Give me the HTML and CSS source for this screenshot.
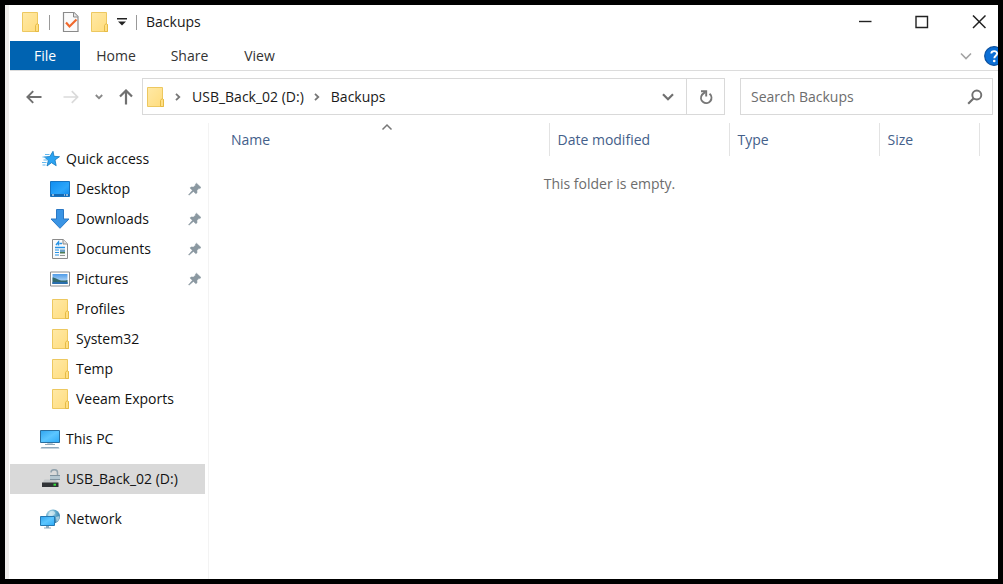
FILE: index.html
```html
<!DOCTYPE html>
<html lang="en">
<head>
<meta charset="utf-8">
<meta name="viewport" content="width=device-width, initial-scale=1">
<title>Backups</title>
<link rel="stylesheet" href="styles.css">
</head>
<body>
<svg class="defs" aria-hidden="true">
  <defs>
    <linearGradient id="g-folder" x1="0" y1="0" x2="1" y2="1"><stop offset="0" stop-color="#ffe9a6"/><stop offset="1" stop-color="#ffdc7c"/></linearGradient>
    <linearGradient id="g-screen" x1="0" y1="0" x2="1" y2="1"><stop offset="0" stop-color="#2fa4ee"/><stop offset=".5" stop-color="#5cc6ff"/><stop offset="1" stop-color="#2daaf7"/></linearGradient>
    <linearGradient id="g-desk" x1="0" y1="0" x2="1" y2="1"><stop offset="0" stop-color="#0f8df0"/><stop offset=".6" stop-color="#2ca6fb"/><stop offset="1" stop-color="#0c86ea"/></linearGradient>
    <linearGradient id="g-sky" x1="0" y1="0" x2="0" y2="1"><stop offset="0" stop-color="#4f9be8"/><stop offset="1" stop-color="#d6ecfa"/></linearGradient>
    <radialGradient id="g-globe" cx=".35" cy=".3" r=".8"><stop offset="0" stop-color="#c9e8f2"/><stop offset=".5" stop-color="#5ba5c8"/><stop offset="1" stop-color="#2c6f9d"/></radialGradient>
  </defs>
  <symbol id="folder" viewBox="0 0 20 22">
    <path d="M2.500 1.500h15v11l1 1v7h-16z" fill="url(#g-folder)" stroke="#edc860"/>
    <path d="M15.500 20.500v-6l1.500-2 1.500 1v7z" fill="#ffdf85" stroke="#e6bb45"/>
  </symbol>
  <symbol id="pin" viewBox="0 0 14 14">
    <path d="M8.500 1.200 13 5.500 11.800 6.600 11 6.300 8.900 8.600 9.100 10.700 7.900 11.800 5.400 9.400 1 13.200.6 12.800 4.400 8.300 2 5.900 3.200 4.900 5.400 5.100 7.700 3 7.300 2.300z" fill="#8b98a1" stroke="#8b98a1" stroke-width=".5"/>
  </symbol>
</svg>

<div class="window">
  <header class="titlebar">
    <div class="quickbar">
      <svg class="folder"><use href="#folder"/></svg>
      <span class="rule"></span>
      <button class="bare properties" aria-label="Properties">
        <svg width="18" height="22" viewBox="0 0 18 22"><path d="M1.500 1.500h10.500l4 4v15H1.500z" fill="#fafafa" stroke="#8a8a8a" stroke-width="1.200"/><path d="M11.500 1.500v4.500H16" fill="#e6e6e6" stroke="#8a8a8a"/><path d="m4 11.500 3.500 4 7-7" fill="none" stroke="#f0682c" stroke-width="2.200"/></svg>
      </button>
      <button class="bare" aria-label="New folder"><svg class="folder"><use href="#folder"/></svg></button>
      <button class="bare customize" aria-label="Customize Quick Access Toolbar">
        <svg width="10" height="8" viewBox="0 0 10 8"><path d="M0 0h10v1.500H0zM1 3.500h8L5 7.500z" fill="#222"/></svg>
      </button>
      <span class="rule"></span>
    </div>
    <h1 class="title">Backups</h1>
    <div class="caption">
      <button class="bare" aria-label="Minimize"><svg width="14" height="14" viewBox="0 0 14 14"><path d="M1 6.500h12.500" stroke="#222" stroke-width="1.400"/></svg></button>
      <button class="bare" aria-label="Maximize"><svg width="14" height="14" viewBox="0 0 14 14"><path d="M1 1.500h11.500V12.500H1z" fill="none" stroke="#222" stroke-width="1.400"/></svg></button>
      <button class="bare" aria-label="Close"><svg width="14" height="14" viewBox="0 0 14 14"><path d="m1 .5 12.500 12.500M13.500.5 1 13" stroke="#222" stroke-width="1.500"/></svg></button>
    </div>
  </header>

  <nav class="ribbon" aria-label="Ribbon">
    <button class="tab file">File</button>
    <button class="tab">Home</button>
    <button class="tab">Share</button>
    <button class="tab">View</button>
    <div class="ribbon-end">
      <button class="bare" aria-label="Expand the Ribbon"><svg width="12" height="8" viewBox="0 0 12 8"><path d="m1 1.500 5 5 5-5" fill="none" stroke="#a3a3a3" stroke-width="1.600"/></svg></button>
      <button class="bare" aria-label="Help"><svg width="20" height="20" viewBox="0 0 20 20"><circle cx="10" cy="10" r="9.300" fill="#0b6fd6" stroke="#0a4f9e" stroke-width="1.200"/><path d="M7.300 7.600c0-3.300 5.800-3.300 5.800 0 0 2-2.800 2.200-2.800 4.600" fill="none" stroke="#fff" stroke-width="1.900"/><circle cx="10.200" cy="15" r="1.300" fill="#fff"/></svg></button>
    </div>
  </nav>

  <div class="toolbar">
    <div class="history">
      <button class="bare back" aria-label="Back"><svg width="16" height="14" viewBox="0 0 16 14"><path d="M15.500 7H1.500M7.200 1.200 1.400 7l5.800 5.800" fill="none" stroke="#707070" stroke-width="1.900"/></svg></button>
      <button class="bare" aria-label="Forward" disabled><svg width="16" height="14" viewBox="0 0 16 14"><path d="M.5 7h14M8.800 1.200 14.600 7l-5.800 5.800" fill="none" stroke="#dadada" stroke-width="1.700"/></svg></button>
      <button class="bare" aria-label="Recent locations"><svg width="8" height="6" viewBox="0 0 8 6"><path d="m.8 1 3.200 3.200L7.200 1" fill="none" stroke="#888" stroke-width="1.800"/></svg></button>
      <button class="bare" aria-label="Up"><svg width="14" height="16" viewBox="0 0 14 16"><path d="M7 15.500v-14M1 7.500l6-6 6 6" fill="none" stroke="#707070" stroke-width="2.200"/></svg></button>
    </div>
    <div class="address">
      <svg class="folder"><use href="#folder"/></svg>
      <svg class="crumb-arrow" viewBox="0 0 6 8"><path d="M1 .8 4.300 4 1 7.200" fill="none" stroke="#777" stroke-width="1.800"/></svg>
      <a class="crumb" href="#drive">USB_Back_02 (D:)</a>
      <svg class="crumb-arrow" viewBox="0 0 6 8"><path d="M1 .8 4.300 4 1 7.200" fill="none" stroke="#777" stroke-width="1.800"/></svg>
      <a class="crumb" href="#files">Backups</a>
      <button class="bare previous" aria-label="Previous locations"><svg width="12" height="8" viewBox="0 0 12 8"><path d="m1 1.300 5 5 5-5" fill="none" stroke="#707070" stroke-width="2.200"/></svg></button>
      <button class="bare refresh" aria-label="Refresh"><svg width="14" height="16" viewBox="0 0 14 16"><path d="M10.500 4.800A5.200 5.200 0 1 1 3 5.800L6.200 3" fill="none" stroke="#777" stroke-width="2"/><path d="M2 2.200h5.200v5.300" fill="none" stroke="#777" stroke-width="1.900"/></svg></button>
    </div>
    <div class="search">
      <input type="search" placeholder="Search Backups" aria-label="Search Backups">
      <button class="bare" aria-label="Search"><svg width="16" height="16" viewBox="0 0 16 16"><circle cx="9.800" cy="6" r="4.500" fill="none" stroke="#707070" stroke-width="1.900"/><path d="M6.700 9.200 1.200 14.700" stroke="#707070" stroke-width="2.100"/></svg></button>
    </div>
  </div>

  <div class="body">
    <nav class="tree" aria-label="Navigation pane">
      <a class="row root" href="#quick">
        <svg class="icon" viewBox="0 0 20 20"><path d="M13 2.300 14 7.300l5.500.4-4.500 3.300 1.200 5.700-4.700-3L7 17l1.300-5.500L4.500 8l5.300-.5z" fill="#2ba3f2" stroke="#1478bd" stroke-width=".8"/><path d="M5 5.500h4.500M2.500 8h4M3.500 11h4M2 13.500h4.500M2.500 16h3" stroke="#63b8ef" stroke-width="1.100"/></svg>
        <span>Quick access</span>
      </a>
      <a class="row" href="#desktop">
        <svg class="icon" viewBox="0 0 20 20"><path d="M.5 2.500h19v15H.5z" fill="url(#g-desk)" stroke="#1773c0"/><path d="M1 15h18v2H1z" fill="#1569b3"/><path d="M2 15.500h2v1H2zM14 15.500h1v1h-1zM16 15.500h2v1h-2z" fill="#fff"/></svg>
        <span>Desktop</span><svg class="pin"><use href="#pin"/></svg>
      </a>
      <a class="row" href="#downloads">
        <svg class="icon" viewBox="0 0 20 20"><path d="M6.500.5h7v9.500h5.500L10 19.300 1 10h5.500z" fill="#3a94e4" stroke="#2a78c5"/></svg>
        <span>Downloads</span><svg class="pin"><use href="#pin"/></svg>
      </a>
      <a class="row" href="#documents">
        <svg class="icon" viewBox="0 0 20 20"><path d="M2.500.5h10.700l4.300 4.300v14.700h-15z" fill="#fafafa" stroke="#8b8b8b"/><path d="M13 .5V5h4.500" fill="#e4e4e4" stroke="#8b8b8b"/><path d="m6 6 2.500-3v3.500M9.500 4.500H12M5 8.500h10" stroke="#2693e6" stroke-width="1.400" fill="none"/><path d="M5 11h4M5 13.500h4M5 16h4" stroke="#2693e6"/><path d="M10 10.500h5v3h-5z" fill="#6a9fc4"/><path d="M10 13h5v1.500h-5z" fill="#4e7b55"/><path d="M10 16.500h5" stroke="#999"/></svg>
        <span>Documents</span><svg class="pin"><use href="#pin"/></svg>
      </a>
      <a class="row" href="#pictures">
        <svg class="icon" viewBox="0 0 20 20"><path d="M.5 3h19v14H.5z" fill="#fff" stroke="#8e8e8e"/><path d="M2.500 5h15v10h-15z" fill="url(#g-sky)"/><path d="M2.500 8.500c3 0 5 2.500 9 3 2 .3 4 0 6-.5v4h-15z" fill="#33696d"/><path d="M2.500 13h15v2h-15z" fill="#2a6fae"/></svg>
        <span>Pictures</span><svg class="pin"><use href="#pin"/></svg>
      </a>
      <a class="row" href="#profiles"><svg class="folder"><use href="#folder"/></svg><span>Profiles</span></a>
      <a class="row" href="#system32"><svg class="folder"><use href="#folder"/></svg><span>System32</span></a>
      <a class="row" href="#temp"><svg class="folder"><use href="#folder"/></svg><span>Temp</span></a>
      <a class="row" href="#veeam"><svg class="folder"><use href="#folder"/></svg><span>Veeam Exports</span></a>
      <a class="row root spaced" href="#pc">
        <svg class="icon" viewBox="0 0 20 20"><path d="M.5 1.500h19v12H.5z" fill="url(#g-screen)" stroke="#2b6f9f"/><path d="M7.500 14h5l1 2h-7z" fill="#b9c9d4"/><path d="M5 15.500h10" stroke="#91a8b8"/><path d="M1.500 18h17l1 1.500H.5z" fill="#8fa9bc"/></svg>
        <span>This PC</span>
      </a>
      <a class="row root spaced selected" href="#drive" id="drive" aria-current="page">
        <svg class="icon" viewBox="0 0 20 20"><path d="M4.500 10.500H16l2 3.500H2.500z" fill="#c4c8ca"/><path d="M11 3.500C11-.2 17.500-.2 17.500 3.500V6" fill="none" stroke="#91a2ad" stroke-width="1.500"/><path d="M10 6h10v5H10z" fill="#b4c6d0"/><path d="M10 6.500h10M10 10.500h10" stroke="#7f929e"/><path d="M2 13.500h16.500V18H2z" fill="#303336"/><path d="M13.500 14.700H16v2h-2.500z" fill="#35e33c"/></svg>
        <span>USB_Back_02 (D:)</span>
      </a>
      <a class="row root spaced" href="#network">
        <svg class="icon" viewBox="0 0 20 20"><circle cx="13" cy="7.500" r="7" fill="url(#g-globe)"/><path d="M10 2.500c2-1.500 4-1 5 1s-2 2-3 4-3 0-4-1zM16 8l3.500-1c0 3-1 5-3 6.500z" fill="#d7edf2" opacity=".65"/><path d="M.5 7.500h14v9H.5z" fill="url(#g-screen)" stroke="#2479b3"/><path d="M6 17h3v1.500H6zM4 18.500h7v1H4z" fill="#8fa9bc"/></svg>
        <span>Network</span>
      </a>
    </nav>

    <main class="files" id="files">
      <table class="list">
        <colgroup><col><col class="col-date"><col class="col-type"><col class="col-size"><col class="col-end"></colgroup>
        <thead>
          <tr>
            <th scope="col" aria-sort="ascending"><div class="name-head"><span>Name</span><svg class="sort" viewBox="0 0 12 8"><path d="m1.500 6.500 4.500-4.500 4.500 4.500" fill="none" stroke="#777" stroke-width="1.500"/></svg></div></th>
            <th scope="col">Date modified</th>
            <th scope="col">Type</th>
            <th scope="col">Size</th>
            <td></td>
          </tr>
        </thead>
        <tbody><tr><td class="empty" colspan="5">This folder is empty.</td></tr></tbody>
      </table>
    </main>
  </div>
</div>
</body>
</html>
```
FILE: styles.css
```css
* { box-sizing: border-box; }

body {
  margin: 0;
  font: 14px/20px "Open Sans", "Noto Sans", sans-serif;
  color: #1a1a1a;
}

.defs { position: absolute; width: 0; height: 0; }
svg { display: block; flex: none; }

.window {
  display: flex;
  flex-direction: column;
  min-height: 100vh;
  border: 5px solid #000;
  padding-left: 5px;
  background: linear-gradient(to right, #efedeb 4px, #fff 4px);
  overflow: hidden;
}

button, input { font: inherit; color: inherit; }

.bare {
  display: flex;
  align-items: center;
  justify-content: center;
  padding: 0;
  border: 0;
  background: none;
}

.folder { width: 20px; height: 22px; }

/* Title bar */
.titlebar { display: flex; align-items: center; height: 36px; padding: 0 0 2px 10px; }
.quickbar { display: flex; align-items: center; }
.rule { width: 1px; height: 15px; background: #999; margin-left: 9px; }
.properties { margin: 0 9px 0 12px; }
.customize { margin-left: 8px; }
.title { margin: 0 0 0 9px; font-size: 14px; font-weight: 400; }
.caption { display: flex; margin-left: auto; }
.caption .bare { width: 57px; height: 32px; }
.caption .bare:last-child { width: 38px; margin-left: 10px; }

/* Ribbon tabs */
.ribbon { display: flex; height: 30px; border-bottom: 1px solid #dcdcdc; }
.tab { padding: 0; width: 75px; border: 0; background: none; color: #333; }
.tab.file { width: 70px; background: #0063b1; color: #fff; }
.tab:nth-child(2) { width: 72px; }
.tab:nth-child(4) { width: 65px; }
.ribbon-end { display: flex; gap: 12px; margin: 0 -6px 0 auto; }

/* Address row */
.toolbar { display: flex; padding: 7px 5px 8px 0; }
.history { display: flex; align-items: center; gap: 16px; padding: 0 9px 0 16px; }
.back { margin-right: 5px; }
.address, .search { display: flex; align-items: center; height: 37px; border: 1px solid #d9d9d9; }
.address { flex: 1; padding-left: 2px; }
.crumb { color: #1a1a1a; text-decoration: none; white-space: nowrap; }
.crumb-arrow { width: 6px; height: 8px; margin: 0 11px 0 10px; }
.previous { width: 36px; height: 100%; margin-left: auto; }
.refresh { width: 38px; height: 100%; border-left: 1px solid #d9d9d9; }
.search { flex: 0 1 253px; margin-left: 15px; padding: 0 9px 0 10px; }
.search input { flex: 1; min-width: 0; padding: 0; border: 0; outline: 0; background: none; }
.search input::placeholder { color: #6d6d6d; opacity: 1; }

/* Navigation pane */
.body { display: flex; flex: 1; }
.tree { flex: none; width: 199px; padding: 21px 3px 0 0; border-right: 1px solid #f3f3f3; }
.row {
  display: flex;
  align-items: center;
  gap: 6px;
  height: 30px;
  padding: 0 3px 0 40px;
  color: #111;
  text-decoration: none;
}
.root { padding-left: 30px; }
.spaced { margin-top: 10px; }
.selected { background: #d9d9d9; }
.icon { width: 20px; height: 20px; }
.pin { width: 14px; height: 14px; margin-left: auto; }

/* File list */
.files { flex: 1; min-width: 0; }
.list { width: 100%; table-layout: fixed; border-collapse: collapse; }
.col-date { width: 180px; }
.col-type { width: 150px; }
.col-size { width: 100px; }
.col-end { width: 19px; }
th {
  height: 33px;
  padding: 0 8px;
  border-right: 1px solid #e3e3e3;
  color: #44608a;
  font-weight: 400;
  text-align: left;
}
th:first-child { padding: 0; }
.name-head { display: grid; grid-template-columns: 1fr 12px 1fr; height: 33px; align-items: center; padding-left: 16px; }
.name-head span { padding-left: 6px; }
.sort { width: 12px; height: 8px; align-self: start; }
.empty { padding: 18px 0 0 12px; color: #6d6d6d; text-align: center; }
```
